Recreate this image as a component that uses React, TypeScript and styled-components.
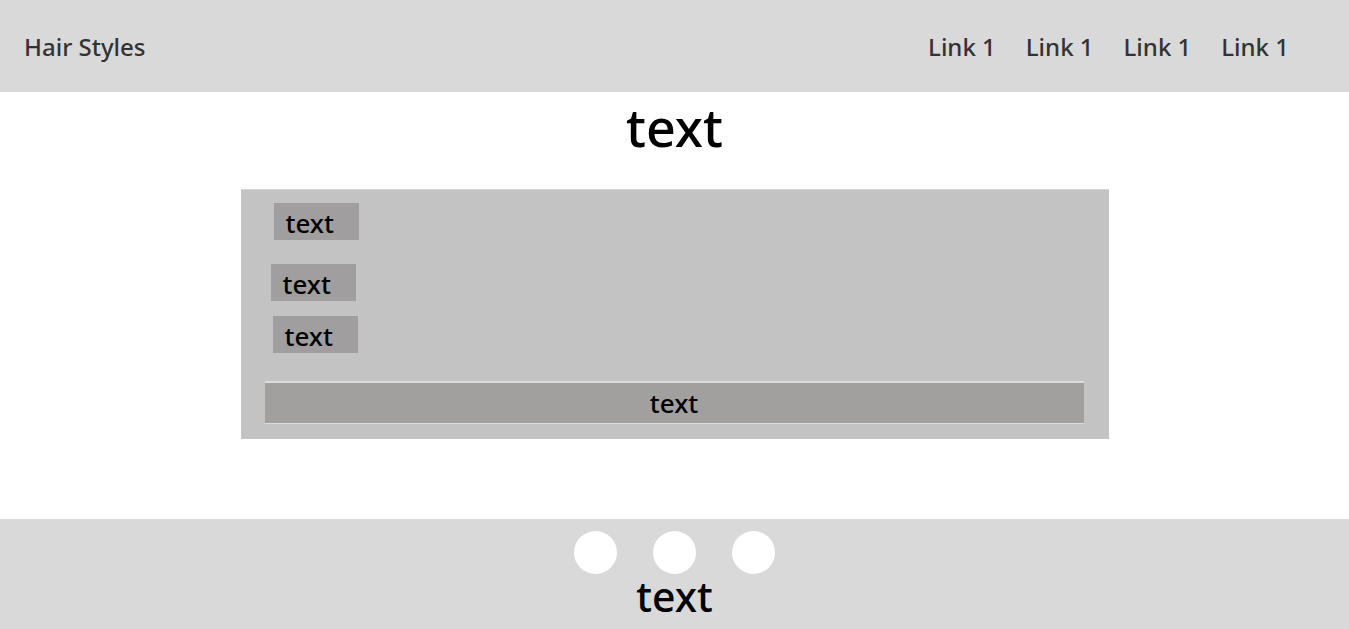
import React from "react";
import styled, { createGlobalStyle } from "styled-components";

const Global = createGlobalStyle`
  html, body { margin: 0; padding: 0; background: #ffffff; }
  body { font-family: "Noto Sans", "Open Sans", sans-serif; }
  * { box-sizing: border-box; }
`;

const Header = styled.header`
  height: 92px;
  background: #d9d9d9;
  display: flex;
  align-items: center;
  justify-content: space-between;
  padding: 0 60px 0 24px;
`;

const Brand = styled.div`
  font-size: 24px;
  color: #333333;
  font-weight: 500;
`;

const Nav = styled.nav`
  display: flex;
  gap: 30px;
`;

const NavLink = styled.a`
  font-size: 24px;
  color: #333333;
  font-weight: 500;
  text-decoration: none;
`;

const Main = styled.main`
  height: 427px;
  display: flex;
  flex-direction: column;
  align-items: center;
`;

const Title = styled.h1`
  margin: 0;
  font-size: 52px;
  font-weight: 500;
  line-height: 70px;
  color: #000000;
  height: 97px;
`;

const Card = styled.section`
  width: 868px;
  height: 250px;
  background: #c3c3c3;
  border-top: 1px solid #d3d3d3;
  padding-top: 13px;
  display: flex;
  flex-direction: column;
  align-items: flex-start;
`;

const Label = styled.div<{ $left: number; $top: number }>`
  margin-left: ${(p) => p.$left}px;
  margin-top: ${(p) => p.$top}px;
  width: 85px;
  height: 37px;
  background: #a09e9e;
  color: #000000;
  font-size: 26px;
  font-weight: 500;
  line-height: 40px;
  padding-left: 12px;
`;

const Button = styled.button`
  margin-left: 24px;
  margin-top: 28px;
  width: 819px;
  height: 43px;
  background: #a29f9f;
  border: none;
  border-top: 2px solid #dcdcdc;
  border-bottom: 1px solid #dcdcdc;
  font-family: "Noto Sans", "Open Sans", sans-serif;
  font-size: 26px;
  font-weight: 500;
  line-height: 38px;
  color: #000000;
  padding: 0;
  text-align: center;
`;

const Footer = styled.footer`
  height: 110px;
  background: #d9d9d9;
  display: flex;
  flex-direction: column;
  align-items: center;
  padding-top: 12px;
`;

const Circles = styled.div`
  display: flex;
  gap: 36px;
`;

const Circle = styled.span`
  width: 43px;
  height: 43px;
  border-radius: 50%;
  background: #ffffff;
  display: block;
`;

const FooterText = styled.div`
  font-size: 41px;
  font-weight: 500;
  line-height: 48px;
  color: #000000;
  margin-top: -2px;
`;

export default function App() {
  return (
    <>
      <Global />
      <Header>
        <Brand>Hair Styles</Brand>
        <Nav>
          <NavLink href="#">Link 1</NavLink>
          <NavLink href="#">Link 1</NavLink>
          <NavLink href="#">Link 1</NavLink>
          <NavLink href="#">Link 1</NavLink>
        </Nav>
      </Header>
      <Main>
        <Title>text</Title>
        <Card>
          <Label $left={33} $top={0}>text</Label>
          <Label $left={30} $top={24}>text</Label>
          <Label $left={32} $top={15}>text</Label>
          <Button>text</Button>
        </Card>
      </Main>
      <Footer>
        <Circles>
          <Circle />
          <Circle />
          <Circle />
        </Circles>
        <FooterText>text</FooterText>
      </Footer>
    </>
  );
}
